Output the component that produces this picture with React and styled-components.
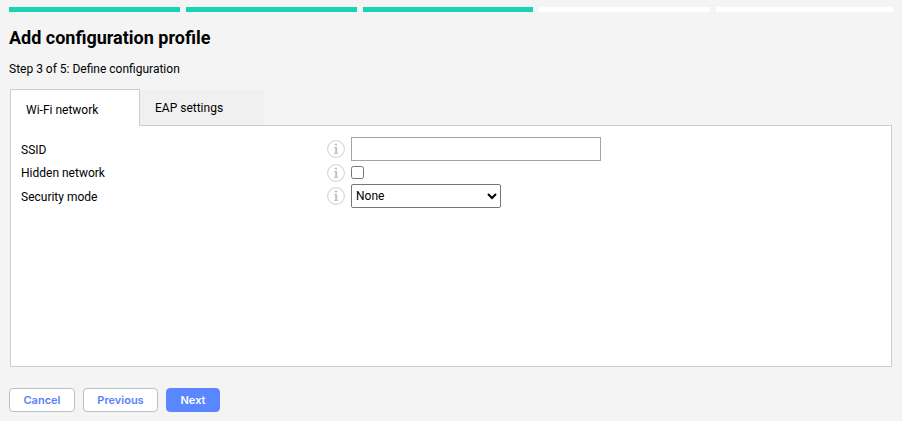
import React from "react";
import styled, { createGlobalStyle } from "styled-components";

const GlobalStyle = createGlobalStyle`
  html, body {
    margin: 0;
    padding: 0;
    height: 100%;
    background: #f4f4f4;
    font-family: Roboto, "Liberation Sans", sans-serif;
    color: #000;
  }
`;

const Page = styled.div`
  width: 902px;
  height: 421px;
  box-sizing: border-box;
  padding: 7px 9px 0 9px;
  overflow: hidden;
`;

const Stepper = styled.div`
  display: flex;
  gap: 6px;
  height: 5px;
`;

const Step = styled.div`
  width: ${(p) => p.$width}px;
  background: ${(p) => (p.$done ? "#17d4b6" : "#ffffff")};
`;

const Title = styled.h1`
  margin: 14px 0 0;
  font-size: 18px;
  line-height: 24px;
  font-weight: 700;
`;

const Subtitle = styled.p`
  margin: 11px 0 0;
  font-size: 12px;
  line-height: 16px;
`;

const Tabs = styled.div`
  display: flex;
  align-items: flex-start;
  margin: 12px 0 0 1px;
  position: relative;
  z-index: 1;
`;

const Tab = styled.div`
  box-sizing: border-box;
  font-size: 12px;
  line-height: 16px;
  ${(p) =>
    p.$active
      ? `
    width: 130px;
    height: 37px;
    padding: 12px 15px 0;
    background: #fff;
    border: 1px solid #cdcdcd;
    border-bottom: none;
  `
      : `
    width: 124px;
    height: 35px;
    margin-top: 1px;
    padding: 10px 15px 0;
    background: #f0f0f0;
  `}
`;

const Panel = styled.div`
  box-sizing: border-box;
  width: 882px;
  height: 242px;
  margin: -1px 0 0 1px;
  padding: 11px 10px 0;
  background: #fff;
  border: 1px solid #cdcdcd;
`;

const Form = styled.div`
  display: grid;
  grid-template-columns: 300px 18px 1fr;
  grid-template-rows: 24px 19px 24px;
  column-gap: 6px;
  row-gap: 2px;
  align-items: center;
`;

const Label = styled.label`
  font-size: 12px;
  line-height: 16px;
  padding-top: ${(p) => p.$nudge || 0}px;
`;

const InfoIcon = styled.svg`
  display: block;
  width: 18px;
  height: 18px;
`;

const TextInput = styled.input`
  display: block;
  box-sizing: border-box;
  width: 250px;
  height: 24px;
  margin: 0;
  border: 1px solid #a3a3a3;
  background: #fff;
`;

const Checkbox = styled.input`
  display: block;
  width: 13px;
  height: 13px;
  margin: 0;
`;

const Select = styled.select`
  display: block;
  box-sizing: border-box;
  width: 150px;
  height: 24px;
  margin: 0;
  font-family: Roboto, "Liberation Sans", sans-serif;
  font-size: 12px;
  background: #fff;
  color: #000;
  border: 1px solid #767676;
  border-radius: 2px;
`;

const Footer = styled.div`
  display: flex;
  gap: 8px;
  margin-top: 21px;
`;

const Button = styled.button`
  box-sizing: border-box;
  height: 24px;
  width: ${(p) => p.$width}px;
  padding: 0;
  border-radius: 4px;
  font-family: Inter, "Liberation Sans", sans-serif;
  font-size: 11px;
  font-weight: 600;
  border: 1px solid ${(p) => (p.$primary ? "#5a86ff" : "#b4c2cc")};
  background: ${(p) => (p.$primary ? "#5a86ff" : "#fff")};
  color: ${(p) => (p.$primary ? "#fff" : "#5a80ff")};
`;

const Info = () => (
  <InfoIcon viewBox="0 0 18 18" fill="none">
    <circle cx="9" cy="9" r="8.4" stroke="#d6d6d6" strokeWidth="1.1" />
    <circle cx="9" cy="4.6" r="1.2" fill="#c0c0c0" />
    <path d="M9.2 7.4V13" stroke="#c0c0c0" strokeWidth="2" />
    <path d="M7 7.5H9.5M7 13.4H11.4" stroke="#c0c0c0" strokeWidth="1" />
  </InfoIcon>
);

const App = () => {
  return (
    <Page>
      <GlobalStyle />
      <Stepper>
        <Step $width={171} $done />
        <Step $width={171} $done />
        <Step $width={170} $done />
        <Step $width={171} />
        <Step $width={177} />
      </Stepper>
      <Title>Add configuration profile</Title>
      <Subtitle>Step 3 of 5: Define configuration</Subtitle>
      <Tabs>
        <Tab $active>Wi-Fi network</Tab>
        <Tab>EAP settings</Tab>
      </Tabs>
      <Panel>
        <Form>
          <Label $nudge={2}>SSID</Label>
          <Info />
          <TextInput type="text" />
          <Label>Hidden network</Label>
          <Info />
          <Checkbox type="checkbox" />
          <Label $nudge={2}>Security mode</Label>
          <Info />
          <Select defaultValue="None">
            <option>None</option>
          </Select>
        </Form>
      </Panel>
      <Footer>
        <Button $width={66}>Cancel</Button>
        <Button $width={75}>Previous</Button>
        <Button $width={54} $primary>
          Next
        </Button>
      </Footer>
    </Page>
  );
};

export default App;
